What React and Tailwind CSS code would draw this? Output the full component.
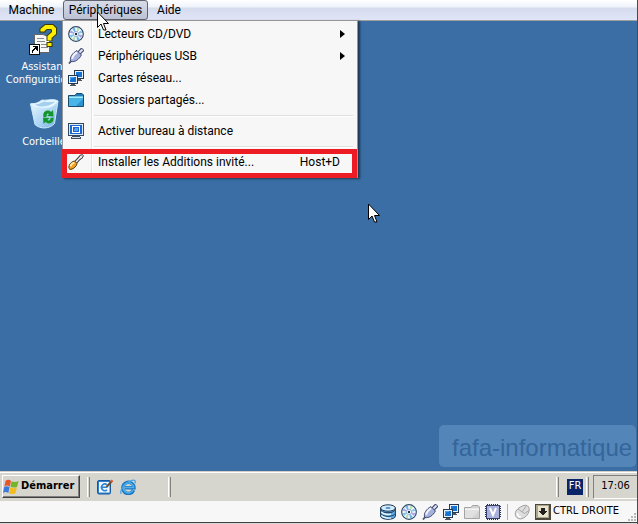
import React from 'react'

const tahoma = "font-['DejaVu_Sans_Condensed','DejaVu_Sans',sans-serif]"

function DiscIcon() {
  return (
    <svg width="16" height="16" viewBox="0 0 16 16">
      <circle cx="8" cy="8" r="7.3" fill="#fbfdff" stroke="#2f4a68" strokeWidth="1.2" />
      <path d="M8 8L4 2.8A6.5 6.5 0 0 1 7 1.8Z" fill="#6fb4ee" />
      <path d="M8 8L9 1.8A6.5 6.5 0 0 1 12 3Z" fill="#b9e0b0" />
      <path d="M8 8L13 4.5A6.5 6.5 0 0 1 14.2 7Z" fill="#7cc6f0" />
      <path d="M8 8L14.2 9A6.5 6.5 0 0 1 13 12Z" fill="#a8a4ea" />
      <path d="M8 8L12 13.2A6.5 6.5 0 0 1 9 14.2Z" fill="#6fb4ee" />
      <path d="M8 8L7 14.2A6.5 6.5 0 0 1 4 13.2Z" fill="#b9e0b0" />
      <path d="M8 8L3 12A6.5 6.5 0 0 1 1.8 9Z" fill="#7cc6f0" />
      <path d="M8 8L1.8 7A6.5 6.5 0 0 1 3 4.2Z" fill="#a8a4ea" />
      <circle cx="8" cy="8" r="2.6" fill="#fff" stroke="#8aa6cc" strokeWidth=".8" />
      <circle cx="8" cy="8" r="1.2" fill="#1c2c40" />
    </svg>
  )
}

function UsbIcon() {
  return (
    <svg width="16" height="16" viewBox="0 0 16 16">
      <path d="M11 5L15 1" stroke="#3c4668" strokeWidth="4.4" />
      <path d="M11 5L14.5 1.5" stroke="#dfe3f7" strokeWidth="2.2" />
      <path d="M1 15.5L4 12" stroke="#4a5170" strokeWidth="1.8" />
      <path d="M2.6 13.4C1.5 9 4.5 5 9 2.6L13.4 7C11 11.5 7 14.5 2.6 13.4Z" fill="#a6b0dc" stroke="#404a74" />
      <path d="M4.2 10.8C4.5 8 6.5 6 9 4.4" fill="none" stroke="#f2f4ff" strokeWidth="2" />
    </svg>
  )
}

function NetworkIcon() {
  return (
    <svg width="16" height="16" viewBox="0 0 16 16" shapeRendering="crispEdges">
      <rect x="6" y="0" width="10" height="9" fill="#26384f" />
      <rect x="7" y="1" width="8" height="7" fill="#e6eef8" />
      <rect x="8" y="2" width="6" height="5" fill="#1673d6" />
      <path d="M10 9h3v1h1v1h-4z" fill="#4b5665" />
      <rect x="0" y="5" width="10" height="9" fill="#26384f" />
      <rect x="1" y="6" width="8" height="7" fill="#e6eef8" />
      <rect x="2" y="7" width="6" height="5" fill="#1673d6" />
      <path d="M2 7h4v1H3v2H2z" fill="#4aa3f0" />
      <path d="M3 14h4v1h1v1H2v-1h1z" fill="#4b5665" />
    </svg>
  )
}

function FolderIcon({ muted }) {
  return (
    <svg width="16" height="16" viewBox="0 0 16 16">
      <path d="M.5 14.5V3.5H7L8.5 1.5H14L15.5 3V14.5Z" fill={muted ? '#d2d2d2' : '#1e7fb8'} stroke={muted ? '#a4a4a4' : '#1c4a6b'} />
      <path d="M1 4.5H15V14H1Z" fill={muted ? '#e0e0e0' : '#48b4e8'} />
      <path d="M1 4.5H15V6H1Z" fill={muted ? '#f4f4f4' : '#a6e8fb'} />
      <path d="M8 14L15 7V14Z" fill={muted ? '#d2d2d2' : '#2b93d0'} />
    </svg>
  )
}

function DisplayIcon() {
  return (
    <svg width="16" height="16" viewBox="0 0 16 16" shapeRendering="crispEdges">
      <rect x="0" y="0" width="16" height="13" fill="#33475f" />
      <rect x="1" y="1" width="14" height="11" fill="#dfe9f5" />
      <rect x="2" y="2" width="12" height="9" fill="#1a66d2" />
      <rect x="4" y="3" width="8" height="7" fill="#fff" />
      <rect x="5" y="4" width="6" height="5" fill="#1a66d2" />
      <path d="M7 5h3v3H6V6h1z" fill="#5aa2f0" />
      <path d="M4 13h8v1H4zM3 14h10v2H3z" fill="#3d4d60" />
      <path d="M4 14h8v1H4z" fill="#d6dde6" />
    </svg>
  )
}

function ScrewdriverIcon() {
  return (
    <svg width="16" height="16" viewBox="0 0 16 16">
      <path d="M7.5 8.5L12.5 3" stroke="#3b3b3b" strokeWidth="3.4" />
      <path d="M11 4.6L11.8 1.4L14.5 .6L15.4 1.8L14.2 4.2L11.8 5.4Z" fill="#e4e4e4" stroke="#3b3b3b" />
      <path d="M7.5 8.5L12.8 2.8" stroke="#f2f2f2" strokeWidth="1.4" />
      <path d="M1 12C2 9 4.5 7 6.8 7.2L9 9.4C8.8 12 6 14.8 3 15.4C1.2 15.6 .4 14 1 12Z" fill="#f0a020" stroke="#5c3a10" />
      <path d="M2.4 12.4C3.2 10.4 4.8 9 6.4 8.7" fill="none" stroke="#ffe9a8" strokeWidth="1.8" />
    </svg>
  )
}

function DatabaseIcon() {
  return (
    <svg width="16" height="16" viewBox="0 0 16 16">
      <path d="M.6 4V12C.6 16.4 15.4 16.4 15.4 12V4Z" fill="#5fb0ec" stroke="#1d3550" />
      <path d="M1.2 6.4C3 9.5 13 9.5 14.8 6.4M1.2 10C3 13.1 13 13.1 14.8 10" fill="none" stroke="#1d3550" />
      <path d="M1.4 7.8C3 10.6 9 10.8 11 10.2M1.4 11.4C3 14 9 14.4 11 13.8" fill="none" stroke="#e4f6ff" strokeWidth="1.4" />
      <ellipse cx="8" cy="4" rx="7.4" ry="3.2" fill="#d2ecfc" stroke="#1d3550" />
      <ellipse cx="8" cy="4" rx="2.6" ry="1" fill="#4f8fc8" />
    </svg>
  )
}

function ChipIcon() {
  return (
    <svg width="16" height="16" viewBox="0 0 16 16" shapeRendering="crispEdges">
      <path d="M2 .5h12M2 15.5h12M.5 2v12M15.5 2v12" stroke="#26304c" strokeDasharray="1 1" />
      <rect x="1" y="1" width="14" height="14" fill="#34406a" />
      <rect x="2" y="2" width="12" height="12" fill="#a9b1dc" />
      <path d="M5 4l3 7 3-7" fill="none" stroke="#fff" strokeWidth="2" shapeRendering="auto" />
    </svg>
  )
}

function MouseIcon() {
  return (
    <svg width="16" height="16" viewBox="0 0 16 16">
      <path d="M2 7C4 4 8 1.5 11.5 1.2C14.5 1.5 15.8 4 15 7C14.3 10.5 11 14 7.5 14.8C3 15.6-.2 11.5 2 7Z" fill="#dedede" stroke="#a0a0a0" />
      <path d="M4 5L10.5 9.5L14.8 6.5M8.2 7.8L12.5 1.5" fill="none" stroke="#a8a8a8" />
      <path d="M3.5 9C3.3 11.5 5 13 7 13" fill="none" stroke="#fff" strokeWidth="1.4" />
    </svg>
  )
}

function HostKeyIcon() {
  return (
    <svg width="16" height="16" viewBox="0 0 16 16" shapeRendering="crispEdges">
      <rect width="16" height="16" fill="#4c493c" />
      <rect x="1" y="1" width="13" height="13" fill="#aaa68e" />
      <rect x="3" y="2" width="10" height="11" fill="#e9e5cf" />
      <path d="M6 4h4v3h2v1h-1v1h-1v1H9v1H7v-1H6V9H5V8H4V7h2z" fill="#222" />
    </svg>
  )
}

function WindowsIcon() {
  return (
    <svg width="16" height="16" viewBox="0 0 16 16">
      <path d="M2.6 1.7C4.4 .4 6.2 .4 8 1.7L6.8 7.4C5 6.3 3.2 6.4 1.4 7.4Z" fill="#e8552a" />
      <path d="M8.6 2.2C10.8 3.3 13 3.4 15.6 1.9L14.1 7.7C11.8 8.9 9.6 8.8 7.4 7.8Z" fill="#74b52c" />
      <path d="M1.2 8.1C3 7 4.8 7 6.6 8L5.3 13.9C3.6 12.8 1.8 12.8 0 13.9Z" fill="#3c79dc" />
      <path d="M7.2 8.5C9.4 9.5 11.6 9.6 13.9 8.3L12.5 14.2C10.2 15.4 8 15.3 5.9 14.3Z" fill="#f3bd22" />
    </svg>
  )
}

function DesktopShortcutIcon() {
  return (
    <svg width="16" height="16" viewBox="0 0 16 16">
      <rect x=".5" y="1.5" width="13" height="13.5" rx="1.5" fill="#2d83cf" stroke="#1857a0" />
      <rect x="2" y="3" width="10.5" height="10.5" fill="#f4f9ff" />
      <path d="M10 5.8A3.3 3.3 0 1 0 10 10.8M5 8.3H10" fill="none" stroke="#2f86d4" strokeWidth="1.6" />
      <path d="M9.5 8L14.5 2.5" stroke="#6f5030" strokeWidth="2" />
      <path d="M14 2.8L15.4 1.2" stroke="#e4572b" strokeWidth="2.2" />
    </svg>
  )
}

function ExplorerIcon() {
  return (
    <svg width="16" height="16" viewBox="0 0 16 16">
      <path d="M13.6 11A5.6 5.6 0 1 1 14 8.7H5" fill="none" stroke="#1c78c4" strokeWidth="3.4" />
      <path d="M13.2 10.8A5.1 5.1 0 1 1 13.6 8.4H5" fill="none" stroke="#4db2ee" strokeWidth="1.5" />
      <path d="M1.2 14.8C-1 11 6 3 12 1.3C15 .5 16 2 14.8 4.4" fill="none" stroke="#46a6e6" strokeWidth="1.3" />
    </svg>
  )
}

function AssistantIcon() {
  return (
    <svg width="32" height="32" viewBox="0 0 32 32">
      <path d="M6.500 10.500H15L21.500 13V28.500H6.500Z" fill="#f7f7f7" stroke="#666" />
      <path d="M9 14.500h7M9 17.500h8M13 20.500h7M13 23.500h7" stroke="#8a8a8a" />
      <path d="M14.500 8.500V6L18 3H24L26 5V9L21.500 13V17" fill="none" stroke="#3d3a00" strokeWidth="6" />
      <path d="M14.500 7.500V6L18 3H24L26 5V9L21.500 13V16.500" fill="none" stroke="#ffee00" strokeWidth="4" />
      <rect x="19" y="18.500" width="5" height="4" fill="#ffee00" stroke="#3d3a00" />
      <g shapeRendering="crispEdges">
        <rect x="1" y="20" width="11" height="11" fill="#111" />
        <rect x="2" y="21" width="9" height="9" fill="#fff" />
        <path d="M5 22h5v5H9v-1H8v-1H7v1H6v1H5v2H4v-3h1v-1h1v-1h1v-1H5z" fill="#000" />
      </g>
    </svg>
  )
}

function RecycleIcon() {
  return (
    <svg width="32" height="32" viewBox="0 0 32 32">
      <defs>
        <linearGradient id="bin" x1="0" x2="1" y1="0" y2="1">
          <stop offset="0" stopColor="#eefaff" />
          <stop offset=".6" stopColor="#a8d3f2" />
          <stop offset="1" stopColor="#6fa9dc" />
        </linearGradient>
      </defs>
      <path d="M2.500 6L7 26.500C12 31.500 22 31 26.500 25.500L30 3Z" fill="url(#bin)" stroke="#cfeaff" />
      <path d="M2.500 6C7 6 10 5 14 2C19 3 25 0 30 3C27 8 22 10 15 10C9 10 5 9 2.500 6Z" fill="#e9f8ff" stroke="#d4efff" />
      <path d="M7 6.500C12 6 14 4 17 3.500C21 5 24 3 27 4C23 7 18 8.500 14 8.500C11 8.500 9 8 7 6.500Z" fill="#a5cfec" />
      <path d="M15.500 19C14 12.500 20.500 11 23 14L25 12L25.500 18.500L19 18L21 16C20 15 18.500 15 18.500 19Z" fill="#12962b" />
      <path d="M25.500 19.500C26.500 25 20.500 27 17.500 24L15.500 26L15 19.500L21.500 20L19.500 22C21 23.500 22.500 22 22.500 20Z" fill="#12962b" />
    </svg>
  )
}

function Cursor() {
  return (
    <svg width="12" height="20" viewBox="0 0 12 20">
      <path d="M.5 1V16.5L4 13L6.500 19H9L6.500 12.5H11.5Z" fill="#fff" stroke="#000" />
    </svg>
  )
}

function MenuItem({ icon, label, shortcut, submenu }) {
  return (
    <li>
      <button className="flex h-[22px] w-full items-center pl-[5px] pr-3 text-left">
        <span className="w-[30px] shrink-0">{icon}</span>
        <span className="flex-1">{label}</span>
        {shortcut && <span className="mr-[5px]">{shortcut}</span>}
        {submenu && (
          <svg width="5" height="8" viewBox="0 0 5 8"><path d="M0 0L5 4L0 8Z" /></svg>
        )}
      </button>
    </li>
  )
}

function MenuSeparator() {
  return (
    <li className="flex h-[9px] items-center pl-[31px] pr-1">
      <hr className="h-[2px] w-full border-t border-b border-t-[#e0e0e0] border-b-white" />
    </li>
  )
}

function DeviceMenu() {
  return (
    <div className="absolute left-[62px] top-5 w-[296px] border border-[#979797] bg-[#f7f7f7] pt-[2px] pb-1 shadow-[2px_1px_2px_rgba(0,0,0,0.5)]">
      <div className="absolute inset-y-0 left-[28px] w-[2px] border-l border-r border-l-[#e2e3e3] border-r-white" />
      <ul className="relative">
        <MenuItem icon={<DiscIcon />} label="Lecteurs CD/DVD" submenu />
        <MenuItem icon={<UsbIcon />} label="Périphériques USB" submenu />
        <MenuItem icon={<NetworkIcon />} label="Cartes réseau..." />
        <MenuItem icon={<FolderIcon />} label="Dossiers partagés..." />
        <MenuSeparator />
        <MenuItem icon={<DisplayIcon />} label="Activer bureau à distance" />
        <MenuSeparator />
        <MenuItem icon={<ScrewdriverIcon />} label="Installer les Additions invité..." shortcut="Host+D" />
      </ul>
      <div className="pointer-events-none absolute -bottom-px -left-px right-0 h-[29px] border-[5px] border-[#ed1c24]" />
    </div>
  )
}

function Groove() {
  return <div className="h-5 w-[3px] border-l border-r border-l-white border-r-[#85837c]" />
}

function App() {
  return (
    <div className="relative flex min-h-screen flex-col border-r border-[#4a4a4a] bg-[#f0f0f0] font-['Roboto','Open_Sans',sans-serif] text-[12px] text-black">
      <nav className="flex h-[21px] items-start border-b border-[#a0a0a0] bg-[linear-gradient(#ffffff_0%,#eff3fb_35%,#d5dcec_40%,#e0e6f8_100%)]">
        <button className="h-5 w-[63px] leading-[18px]">Machine</button>
        <button className="h-5 w-[85px] rounded-[3px] border border-[#5f6470] bg-[linear-gradient(#d8dce8,#bcc2d4)] leading-[18px]">Périphériques</button>
        <button className="h-5 w-[42px] leading-[18px]">Aide</button>
      </nav>

      <main className={`relative flex-1 bg-[#3a6ea5] text-[11px] text-white ${tahoma}`}>
        <div className="flex w-[88px] flex-col items-center pt-[3px] text-center leading-[13px] whitespace-nowrap">
          <AssistantIcon />
          <span className="mt-1">Assistant<br />Configuration d</span>
          <div className="mt-3"><RecycleIcon /></div>
          <span className="mt-[5px]">Corbeille</span>
        </div>
        <div className="absolute right-px bottom-1 flex h-[42px] w-[197px] items-center rounded-[5px] bg-[#5485b8] pt-1 pl-[13px] font-['Liberation_Sans',Arial,sans-serif] text-[24px] text-[#33669b]">
          fafa-informatique
        </div>
        <div className="absolute left-[368px] top-[182px]"><Cursor /></div>
      </main>

      <footer>
        <div className={`flex h-[30px] items-center border-t border-[#d4d0c8] bg-[#d6d5ce] text-[11px] shadow-[inset_0_1px_0_#ffffff] ${tahoma}`}>
          <button className="ml-[2px] flex h-[23px] w-[78px] items-center gap-[2px] border border-t-white border-l-white border-r-[#404040] border-b-[#404040] font-bold shadow-[inset_-1px_-1px_0_#808080]">
            <WindowsIcon />Démarrer
          </button>
          <div className="ml-[7px] flex items-center">
            <Groove />
            <button aria-label="Bureau" className="ml-[7px]"><DesktopShortcutIcon /></button>
            <button aria-label="Internet Explorer" className="ml-[7px]"><ExplorerIcon /></button>
            <div className="ml-8"><Groove /></div>
          </div>
          <div className="ml-auto flex h-full items-center">
            <Groove />
            <span className="ml-2 mr-[3px] flex h-4 w-4 items-center justify-center bg-[#0a246a] text-white">FR</span>
            <Groove />
            <time className="ml-1 flex h-6 w-[44px] items-center justify-center border border-r-0 border-t-[#808080] border-l-[#808080] border-b-white">17:06</time>
          </div>
        </div>
        <div className={`flex h-[21px] items-center justify-end bg-[#f7f7f7] text-[11px] ${tahoma}`}>
          <div className="flex gap-[5px]">
            <DatabaseIcon />
            <DiscIcon />
            <UsbIcon />
            <NetworkIcon />
            <FolderIcon muted />
            <ChipIcon />
          </div>
          <div className="mx-[6px] h-4 w-px bg-[#b0b0b0]" />
          <div className="flex items-center gap-[5px]">
            <MouseIcon />
            <HostKeyIcon />
          </div>
          <span className="ml-[2px] w-[75px] whitespace-nowrap">CTRL DROITE</span>
          <svg width="9" height="9" viewBox="0 0 9 9" className="self-end" fill="#b8b8b8" shapeRendering="crispEdges">
            <path d="M6 0h2v2H6zM3 3h2v2H3zM6 3h2v2H6zM0 6h2v2H0zM3 6h2v2H3zM6 6h2v2H6z" />
          </svg>
        </div>
        <div className="h-[2px] border-t border-[#404040] bg-[#d8d8d8]" />
      </footer>

      <DeviceMenu />
      <div className="absolute left-[97px] top-[11px]"><Cursor /></div>
    </div>
  )
}

export default App
